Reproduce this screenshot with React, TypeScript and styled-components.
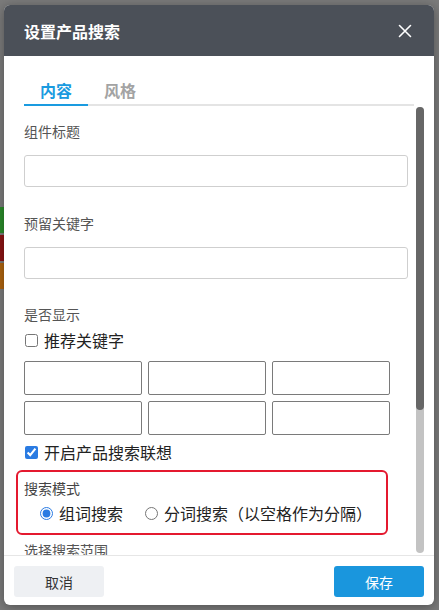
import styled, { createGlobalStyle } from "styled-components";

const GlobalStyle = createGlobalStyle`
  html, body {
    margin: 0;
    padding: 0;
  }
  body {
    font-family: "Noto Sans CJK SC", "Noto Sans", "Liberation Sans", sans-serif;
    color: #333;
  }
  * {
    box-sizing: border-box;
  }
`;

const Page = styled.div`
  position: relative;
  width: 439px;
  height: 610px;
  overflow: hidden;
  background: #7b7b7b;
`;

const BgColumn = styled.div`
  display: flex;
  flex-direction: column;
  gap: 2px;
  width: 4px;
  padding-top: 207px;
`;

const BgBlock = styled.div<{ $color: string }>`
  height: 26px;
  background: ${(p) => p.$color};
`;

const Modal = styled.div`
  position: absolute;
  left: 4px;
  top: 5px;
  width: 430px;
  height: 600px;
  background: #fff;
  border-radius: 6px;
  overflow: hidden;
  display: flex;
  flex-direction: column;
  box-shadow: 0 2px 12px rgba(0, 0, 0, 0.35);
`;

const Header = styled.div`
  height: 51px;
  flex: none;
  background: #4b5058;
  display: flex;
  align-items: center;
  justify-content: space-between;
  padding: 0 22px 0 20px;
`;

const Title = styled.div`
  color: #fff;
  font-size: 16px;
  font-weight: 700;
  line-height: 22px;
`;

const Close = styled.button`
  border: 0;
  background: none;
  padding: 0;
  width: 14px;
  height: 14px;
  display: flex;
  cursor: pointer;
`;

const Tabs = styled.div`
  flex: none;
  display: flex;
  margin: 0 20px;
  padding-top: 23px;
  border-bottom: 2px solid #e4e4e4;
`;

const Tab = styled.div<{ $active?: boolean }>`
  padding: 0 16px 3px;
  margin-bottom: -2px;
  font-size: 16px;
  font-weight: 700;
  line-height: 22px;
  color: ${(p) => (p.$active ? "#1a9be0" : "#a3a3a3")};
  border-bottom: 2px solid ${(p) => (p.$active ? "#1a9be0" : "transparent")};
`;

const Body = styled.div`
  flex: 1;
  min-height: 0;
  display: flex;
  padding-right: 10px;
`;

const Scroll = styled.div`
  flex: 1;
  min-width: 0;
  overflow: hidden;
`;

const ScrollTrack = styled.div`
  flex: none;
  width: 8px;
  margin: 1px 0 2px;
  background: #c3c3c3;
  border-radius: 4px;
`;

const ScrollThumb = styled.div`
  background: #676767;
  border-radius: 4px;
`;

const Content = styled.div`
  padding: 0 8px 0 20px;
  display: flex;
  flex-direction: column;
`;

const Label = styled.div<{ $top: number }>`
  margin-top: ${(p) => p.$top}px;
  font-size: 14px;
  line-height: 20px;
  color: #555;
`;

const TextInput = styled.input`
  margin-top: 14px;
  height: 32px;
  width: 100%;
  border: 1px solid #cfcfcf;
  border-radius: 3px;
  padding: 0 8px;
  font-size: 14px;
  outline: none;
`;

const CheckRow = styled.label<{ $top: number }>`
  margin-top: ${(p) => p.$top}px;
  display: flex;
  align-items: center;
  height: 22px;
  font-size: 16px;
  color: #222;
  input {
    margin: 0 6px 0 1px;
    width: 13px;
    height: 13px;
    accent-color: #2a7be2;
  }
`;

const KeywordGrid = styled.div`
  margin-top: 10px;
  display: grid;
  grid-template-columns: repeat(3, 118px);
  grid-auto-rows: 34px;
  gap: 6px;
`;

const KeywordInput = styled.input`
  width: 100%;
  height: 100%;
  border: 1px solid #7a7a7a;
  border-radius: 2px;
  padding: 0 6px;
  font-size: 14px;
  outline: none;
`;

const ModeBox = styled.div`
  margin: 7px 0 0 -8px;
  width: 372px;
  border: 2px solid #e4192f;
  border-radius: 6px;
  padding: 6px 6px 9px;
`;

const ModeLabel = styled.div`
  font-size: 14px;
  line-height: 20px;
  color: #444;
`;

const RadioRow = styled.div`
  margin-top: 4px;
  padding-left: 16px;
  display: flex;
  gap: 22px;
`;

const RadioOption = styled.label`
  display: flex;
  align-items: center;
  height: 22px;
  font-size: 16px;
  color: #222;
  input {
    margin: 0 6px 0 0;
    width: 13px;
    height: 13px;
    accent-color: #2a7be2;
  }
`;

const Footer = styled.div`
  flex: none;
  height: 50px;
  border-top: 1px solid #e6e6e6;
  display: flex;
  align-items: flex-start;
  justify-content: space-between;
  padding: 10px 10px 0;
`;

const Button = styled.button<{ $primary?: boolean }>`
  width: 90px;
  height: 31px;
  border: 0;
  border-radius: 3px;
  font-family: inherit;
  font-size: 14px;
  cursor: pointer;
  background: ${(p) => (p.$primary ? "#1a96dd" : "#eef0f3")};
  color: ${(p) => (p.$primary ? "#fff" : "#333")};
`;

const keywords = ["", "", "", "", "", ""];

// visible part of the scroll area vs. full content height
const thumbRatio = 0.68;

const App = () => {
  return (
    <Page>
      <GlobalStyle />
      <BgColumn>
        <BgBlock $color="#2a8c2a" />
        <BgBlock $color="#8c1414" />
        <BgBlock $color="#b0650f" />
      </BgColumn>
      <Modal>
        <Header>
          <Title>设置产品搜索</Title>
          <Close aria-label="关闭">
            <svg width="14" height="14" viewBox="0 0 14 14">
              <path d="M1.5 1.5 L12.5 12.5 M12.5 1.5 L1.5 12.5" stroke="#fff" strokeWidth="1.6" strokeLinecap="round" />
            </svg>
          </Close>
        </Header>
        <Tabs>
          <Tab $active>内容</Tab>
          <Tab>风格</Tab>
        </Tabs>
        <Body>
          <Scroll>
            <Content>
              <Label $top={15}>组件标题</Label>
              <TextInput />
              <Label $top={26}>预留关键字</Label>
              <TextInput />
              <Label $top={25}>是否显示</Label>
              <CheckRow $top={5}>
                <input type="checkbox" />
                推荐关键字
              </CheckRow>
              <KeywordGrid>
                {keywords.map((k, i) => (
                  <KeywordInput key={i} defaultValue={k} />
                ))}
              </KeywordGrid>
              <CheckRow $top={6}>
                <input type="checkbox" defaultChecked />
                开启产品搜索联想
              </CheckRow>
              <ModeBox>
                <ModeLabel>搜索模式</ModeLabel>
                <RadioRow>
                  <RadioOption>
                    <input type="radio" name="mode" defaultChecked />
                    组词搜索
                  </RadioOption>
                  <RadioOption>
                    <input type="radio" name="mode" />
                    分词搜索（以空格作为分隔）
                  </RadioOption>
                </RadioRow>
              </ModeBox>
              <Label $top={5}>选择搜索范围</Label>
            </Content>
          </Scroll>
          <ScrollTrack>
            <ScrollThumb style={{ height: `${thumbRatio * 100}%` }} />
          </ScrollTrack>
        </Body>
        <Footer>
          <Button>取消</Button>
          <Button $primary>保存</Button>
        </Footer>
      </Modal>
    </Page>
  );
};

export default App;
